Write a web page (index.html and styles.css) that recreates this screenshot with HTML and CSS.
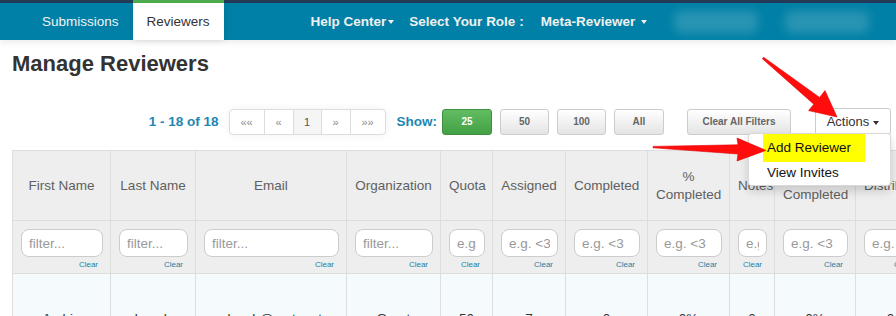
FILE: index.html
```html
<!DOCTYPE html>
<html lang="en">
  <head>
    <meta charset="UTF-8" />
    <meta name="viewport" content="width=device-width, initial-scale=1.0" />
    <title>Manage Reviewers</title>
    <link rel="stylesheet" href="styles.css">
  </head>
  <body>
    <div class="top-strip"></div>
    <nav class="navbar">
      <ul class="nav-tabs">
        <li>Submissions</li>
        <li class="active">Reviewers</li>
      </ul>
      <ul class="nav-menu">
        <li>Help Center<span class="caret"></span></li>
        <li>Select Your Role :</li>
        <li class="role">Meta-Reviewer <span class="caret"></span></li>
        <li class="blurred"></li>
        <li class="blurred"></li>
      </ul>
    </nav>

    <main class="page">
      <h1>Manage Reviewers</h1>

      <div class="toolbar">
        <span class="count">1 - 18 of 18</span>
        <ul class="pager">
          <li>&laquo;&laquo;</li>
          <li>&laquo;</li>
          <li class="current">1</li>
          <li>&raquo;</li>
          <li>&raquo;&raquo;</li>
        </ul>
        <span class="show-label">Show:</span>
        <button class="size-btn selected">25</button>
        <button class="size-btn">50</button>
        <button class="size-btn">100</button>
        <button class="size-btn wide">All</button>
        <button class="size-btn clear-btn">Clear All Filters</button>
        <div class="actions">
          <button class="actions-btn">Actions<span class="caret"></span></button>
          <ul class="dropdown">
            <li><span class="highlight">Add Reviewer</span></li>
            <li>View Invites</li>
          </ul>
        </div>
      </div>

      <div class="table-wrap">
        <table class="reviewers">
          <colgroup>
            <col style="width: 98px">
            <col style="width: 85px">
            <col style="width: 151px">
            <col style="width: 94px">
            <col style="width: 52px">
            <col style="width: 73px">
            <col style="width: 82px">
            <col style="width: 82px">
            <col style="width: 45px">
            <col style="width: 81px">
            <col style="width: 70px">
          </colgroup>
          <thead>
            <tr class="head-row">
              <th>First Name</th>
              <th>Last Name</th>
              <th>Email</th>
              <th>Organization</th>
              <th>Quota</th>
              <th>Assigned</th>
              <th>Completed</th>
              <th>% Completed</th>
              <th class="tight">Notes</th>
              <th>% Not Completed</th>
              <th class="tight">Distributed</th>
            </tr>
            <tr class="filter-row">
              <td><input placeholder="filter..."><span class="clear">Clear</span></td>
              <td><input placeholder="filter..."><span class="clear">Clear</span></td>
              <td><input placeholder="filter..."><span class="clear">Clear</span></td>
              <td><input placeholder="filter..."><span class="clear">Clear</span></td>
              <td><input placeholder="e.g. <3"><span class="clear">Clear</span></td>
              <td><input placeholder="e.g. <3"><span class="clear">Clear</span></td>
              <td><input placeholder="e.g. <3"><span class="clear">Clear</span></td>
              <td><input placeholder="e.g. <3"><span class="clear">Clear</span></td>
              <td><input placeholder="e.g. <3"><span class="clear">Clear</span></td>
              <td><input placeholder="e.g. <3"><span class="clear">Clear</span></td>
              <td><input placeholder="e.g. <3"><span class="clear">Clear</span></td>
            </tr>
          </thead>
          <tbody>
            <tr>
              <td>Archie</td>
              <td>Leach</td>
              <td>aleach@emt.emt</td>
              <td>Grant</td>
              <td>50</td>
              <td>7</td>
              <td>0</td>
              <td>0%</td>
              <td>0</td>
              <td>0%</td>
              <td>0</td>
            </tr>
          </tbody>
        </table>
      </div>
    </main>

    <!-- annotation arrows drawn over the screenshot -->
    <svg class="arrows" width="896" height="316" viewBox="0 0 896 316">
      <polygon points="763.6,57.2 819.6,97.4 825,90.6 837,117 808.6,110.6 813.8,104.2 762.4,58.8" />
      <polygon points="653,146.4 738,144.8 737,138 766,150.4 737,161 738,154 653,147.8" />
    </svg>
  </body>
</html>
```

FILE: styles.css
```css
html,
body {
  overflow: hidden;
}

body {
  margin: 0;
  font-family: "Liberation Sans", Arial, sans-serif;
  font-size: 13.5px;
  color: #333;
  background: #fff;
}

.top-strip {
  height: 3px;
  background: #243a56;
}

.navbar {
  display: flex;
  height: 37px;
  padding-left: 28px;
  background: #0080a6;
  box-shadow: 0 3px 6px rgba(0, 0, 0, 0.07);
  position: relative;
}

.navbar ul {
  display: flex;
  margin: 0;
  padding: 0;
  list-style: none;
}

.nav-tabs li {
  padding: 0 14px;
  line-height: 37px;
  color: #f2f2f2;
}

.nav-tabs li.active {
  position: relative;
  background: #fff;
  color: #333;
  box-shadow: 0 0 6px rgba(0, 0, 0, 0.12);
}

.nav-tabs li.active::before {
  content: "";
  position: absolute;
  top: -3px;
  left: 0;
  right: 0;
  height: 3px;
  background: #4aaa4c;
}

.nav-menu {
  margin-left: 87px !important;
  align-items: center;
  gap: 15px;
}

.nav-menu li {
  color: #f0f0f0;
  font-weight: bold;
  white-space: nowrap;
}

.nav-menu li.role {
  margin-left: 2px;
}

.nav-menu li.blurred {
  width: 84px;
  height: 22px;
  margin-left: 12px;
  border-radius: 8px;
  background: rgba(255, 255, 255, 0.16);
  filter: blur(5px);
}

.caret {
  display: inline-block;
  width: 0;
  height: 0;
  margin-left: 2px;
  vertical-align: middle;
  border-top: 4px solid;
  border-left: 3.5px solid transparent;
  border-right: 3.5px solid transparent;
}

.page {
  padding-left: 12px;
}

h1 {
  margin: 11px 0 0;
  font-size: 22px;
  line-height: 25px;
  color: #333;
}

.toolbar {
  display: flex;
  justify-content: flex-end;
  align-items: center;
  height: 27px;
  margin-top: 32px;
  padding-right: 5px;
}

.count,
.show-label {
  color: #1c87b3;
  font-weight: bold;
}

.count {
  margin-right: 10px;
}

.show-label {
  margin: 0 5px 0 11px;
}

.pager {
  display: flex;
  margin: 0;
  padding: 0;
  list-style: none;
  box-shadow: 0 0 8px rgba(0, 0, 0, 0.06);
  border-radius: 4px;
}

.pager li {
  display: flex;
  align-items: center;
  justify-content: center;
  box-sizing: border-box;
  width: 30px;
  height: 26px;
  margin-left: -1px;
  border: 1px solid #ddd;
  font-size: 11px;
  color: #8c8c8c;
  background: #fff;
}

.pager li:first-child {
  width: 36px;
  margin-left: 0;
  border-radius: 4px 0 0 4px;
}

.pager li:last-child {
  width: 36px;
  border-radius: 0 4px 4px 0;
}

.pager li.current {
  width: 29px;
  background: #f5f5f5;
  color: #555;
}

.size-btn {
  width: 49px;
  height: 26px;
  margin-left: 8px;
  padding: 0;
  border: 1px solid #ccc;
  border-radius: 3px;
  background: linear-gradient(#fff, #e4e4e4);
  font-family: inherit;
  font-size: 10px;
  font-weight: bold;
  color: #666;
}

.size-btn.wide {
  width: 50px;
}

.size-btn.selected {
  width: 50px;
  margin-left: 0;
  border-color: #3e8f3e;
  background: linear-gradient(#62bd62, #44a044);
  color: #fff;
}

.clear-btn {
  width: 104px;
  margin-left: 23px;
}

.actions {
  position: relative;
  margin-left: 24px;
}

.actions-btn {
  width: 76px;
  height: 27px;
  padding: 0;
  border: 1px solid #ccc;
  border-radius: 3px;
  background: #fff;
  font-family: inherit;
  font-size: 13px;
  color: #333;
}

.actions-btn .caret {
  margin-left: 4px;
}

.dropdown {
  position: absolute;
  top: 25px;
  right: 0;
  z-index: 10;
  width: 143px;
  margin: 0;
  padding: 0 0 1px;
  list-style: none;
  box-sizing: border-box;
  background: #fff;
  border: 1px solid rgba(0, 0, 0, 0.15);
  border-radius: 4px;
  box-shadow: 0 5px 10px rgba(0, 0, 0, 0.16);
}

.dropdown li {
  padding-left: 18px;
  line-height: 22px;
  color: #111;
}

.dropdown li:first-child {
  padding-left: 14px;
  line-height: 28px;
}

.highlight {
  display: inline-block;
  padding: 0 14px 0 4px;
  background: #ffff00;
}

.table-wrap {
  margin-top: 15px;
  overflow: hidden;
}

.reviewers {
  width: 913px;
  table-layout: fixed;
  border-collapse: collapse;
}

.reviewers th,
.reviewers td {
  border: 1px solid #ddd;
  text-align: center;
  vertical-align: middle;
}

.head-row th {
  height: 70px;
  box-sizing: border-box;
  padding: 0 8px;
  font-weight: normal;
  line-height: 18px;
  color: #606060;
  background: #eee;
  white-space: normal;
}

.head-row th.tight {
  text-align: left;
  white-space: nowrap;
}

.filter-row td {
  height: 53px;
  box-sizing: border-box;
  padding: 0 7px 0 8px;
  background: #eee;
  text-align: right;
  vertical-align: top;
}

.filter-row input {
  display: block;
  box-sizing: border-box;
  width: 100%;
  height: 28px;
  margin-top: 8px;
  padding: 0 7px;
  border: 1px solid #ccc;
  border-radius: 8px;
  font-family: inherit;
  font-size: 13.5px;
  background: #fff;
}

.filter-row input::placeholder {
  color: #999;
}

.clear {
  display: block;
  margin: 3px 5px 0 0;
  font-size: 8px;
  line-height: 9px;
  color: #1d7fa3;
}

tbody td {
  height: 88px;
  padding: 0 8px;
  background: #f5fbfd;
  color: #333;
}

.arrows {
  position: absolute;
  top: 0;
  left: 0;
  z-index: 20;
  pointer-events: none;
}

.arrows polygon {
  fill: #ff0d0d;
  stroke: #e00000;
  stroke-width: 0.6;
  stroke-linejoin: round;
}
```
